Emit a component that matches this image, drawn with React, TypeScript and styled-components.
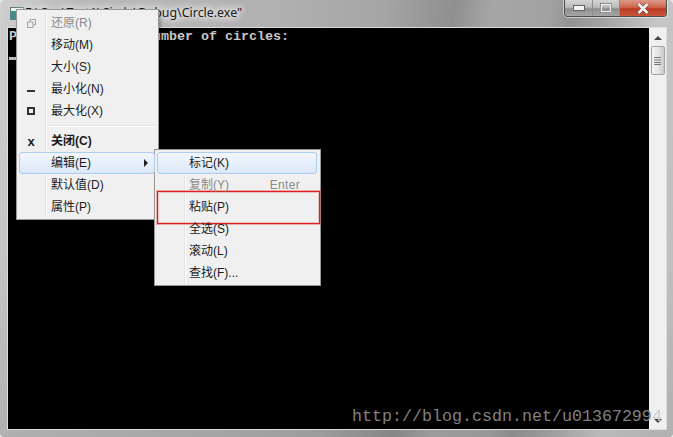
import React from "react";
import styled, { createGlobalStyle } from "styled-components";

const Global = createGlobalStyle`
  html, body { margin: 0; padding: 0; background: #e8e8e8; overflow: hidden; }
  #root { width: 673px; height: 437px; }
`;
const UI = `"Liberation Sans", "Noto Sans CJK SC", sans-serif`;

const Win = styled.div`
  position: relative; width: 673px; height: 437px; display: flex; flex-direction: column; overflow: hidden;
  border-radius: 5px 5px 4px 4px;
  background: linear-gradient(#00000000 60%, #00000010), linear-gradient(98deg, #cfcfcf 0%, #bababa 10%, #b0b0b0 38%, #a6a6a6 52%, #8f8f8f 62%, #a6a6a6 67%, #a2a2a2 75%, #939393 78%, #aaaaaa 84%, #c6c6c6 90%, #bcbcbc 100%);
`;
const TitleBar = styled.div`
  height: 27px; flex: none; display: flex; align-items: flex-start; padding-left: 10px; box-sizing: border-box;
`;
const AppIcon = styled.div`
  width: 14px; height: 13px; margin-top: 7px; flex: none; box-sizing: border-box;
  border: 1px solid #5f7f80; background: linear-gradient(#eef4f4 0 3px, #3f8f86 3px);
`;
const TitleText = styled.div`
  margin: 5px 0 0 1px; width: 212px; font: 12.4px/15px "Noto Sans", sans-serif; color: #1a1a1a; white-space: nowrap;
  text-shadow: 0 0 6px #f4f4f4, 0 0 6px #f4f4f4, 0 0 10px #e8e8e8, 0 0 14px #e8e8e8;
`;
const Caption = styled.div`
  margin-left: auto; margin-right: 6px; width: 103px; height: 17px; display: flex; box-sizing: border-box;
  border: 1px solid #4e4e4e; border-top: none; border-radius: 0 0 4px 4px; overflow: hidden;
  box-shadow: 0 0 0 1px rgba(255,255,255,.5);
`;
const CapBtn = styled.div<{ $w: number; $red?: boolean }>`
  width: ${p => p.$w}px; flex: none; display: flex; align-items: center; justify-content: center; box-sizing: border-box;
  border-right: ${p => (p.$red ? "none" : "1px solid #8e8e8e")};
  background: ${p => p.$red
    ? "linear-gradient(#dc9a88 0%, #d0664c 45%, #bb3a22 55%, #c8583c 100%)"
    : "linear-gradient(#d4d4d4 0%, #bcbcbc 45%, #8f8f8f 55%, #a6a6a6 100%)"};
`;
const Client = styled.div`
  flex: 1; display: flex; margin: 0 6px 7px 7px; border: 1px solid #dcdcdc;
`;
const Console = styled.div`
  flex: 1; background: #000; color: #c8c8c8; font: bold 13.33px/16px "Liberation Mono", monospace; padding: 1px 0 0 1px; white-space: pre;
`;
const Cursor = styled.div`
  width: 8px; height: 3px; background: #b8b8b8; margin-top: 12px;
`;
const Scrollbar = styled.div`
  width: 17px; flex: none; display: flex; flex-direction: column; align-items: center; background: #f0f0f0; box-sizing: border-box; padding-top: 8px;
`;
const Thumb = styled.div`
  width: 14px; height: 29px; margin-top: 6px; box-sizing: border-box; border: 1px solid #a4a4a4; border-radius: 2px;
  background: linear-gradient(90deg, #f4f4f4, #e4e4e4 55%, #c8c8c8); display: flex; align-items: center; justify-content: center;
`;
const ScrollGap = styled.div` flex: 1; `;
const Arrow = styled.div<{ $down?: boolean }>`
  width: 0; height: 0; border-left: 4px solid transparent; border-right: 4px solid transparent;
  ${p => (p.$down ? "border-top: 4px solid #444; margin-bottom: 6px;" : "border-bottom: 4px solid #444;")}
`;
const Watermark = styled.div`
  position: absolute; left: 352px; top: 407px; font: 16.67px/20px "Liberation Mono", monospace; color: #808080; white-space: nowrap;
`;
const Faint = styled.span` color: #cfcfcf; `;
const Menu = styled.div<{ $x: number; $y: number; $w: number; $gutter: number }>`
  position: absolute; left: ${p => p.$x}px; top: ${p => p.$y}px; width: ${p => p.$w}px; box-sizing: border-box; padding: 2px 2px 1px;
  background: #f0f0f0; border: 1px solid #979797; box-shadow: 2px 2px 3px rgba(0,0,0,.25);
  font: 12px/22px ${UI}; color: #1c1c1c;
  &::before { content: ""; position: absolute; top: 2px; bottom: 2px; left: ${p => p.$gutter}px; width: 2px; background: linear-gradient(90deg, #e2e3e3 50%, #fff 50%); }
`;
const Item = styled.div<{ $on?: boolean; $off?: boolean; $bold?: boolean; $pad: number }>`
  position: relative; z-index: 1; height: 22px; display: flex; align-items: center; box-sizing: border-box; padding: 0 0 1px ${p => p.$pad}px;
  margin-right: 1px; border-radius: 3px; border: 1px solid ${p => (p.$on ? "#aeccee" : "transparent")};
  background: ${p => (p.$on ? "linear-gradient(#f2f6fc, #dce8f8)" : "transparent")};
  color: ${p => (p.$off ? "#8a8a8a" : "#1c1c1c")}; font-weight: ${p => (p.$bold ? 700 : 400)};
`;
const ItemIcon = styled.div`
  position: absolute; left: 4px; top: 3px; width: 14px; height: 14px; display: flex; align-items: center; justify-content: center; font: bold 13px/13px "Liberation Sans", sans-serif;
`;
const Sep = styled.div`
  height: 8px; margin-left: 30px; position: relative; z-index: 1;
  &::after { content: ""; display: block; position: relative; top: 3px; height: 2px; background: linear-gradient(#e2e3e3 50%, #fff 50%); }
`;
const Chevron = styled.div`
  position: absolute; right: 6px; top: 6px; width: 0; height: 0; border-top: 4px solid transparent; border-bottom: 4px solid transparent; border-left: 4px solid #222;
`;
const Shortcut = styled.span`
  position: absolute; right: 16px; letter-spacing: .3px;
`;
const RedBox = styled.div`
  position: absolute; left: 157px; top: 191px; width: 163px; height: 33px; box-sizing: border-box; border: 1px solid #e02020;
  box-shadow: 0 0 0 1px rgba(224, 60, 60, .4), inset 0 0 0 1px rgba(224, 60, 60, .25);
`;
const Px = styled.svg` display: block; `;

const P = 31;
const S = 31;

export default function App() {
  return (
    <Win>
      <Global />
      <TitleBar>
        <AppIcon />
        <TitleText>E:\C++\Test1\Circle\Debug\Circle.exe"</TitleText>
        <Caption>
          <CapBtn $w={28}>
            <Px width="12" height="6" viewBox="0 0 12 6"><rect x=".5" y=".5" width="11" height="5" fill="#f4f4f4" stroke="#666" /></Px>
          </CapBtn>
          <CapBtn $w={27}>
            <Px width="12" height="10" viewBox="0 0 12 10"><rect x="1" y="1" width="10" height="8" fill="none" stroke="#f0f0f0" strokeWidth="2" /><rect x=".5" y=".5" width="11" height="9" fill="none" stroke="#555" strokeWidth=".6" /></Px>
          </CapBtn>
          <CapBtn $w={46} $red>
            <Px width="12" height="11" viewBox="0 0 12 11"><path d="M1.5 1 10.5 10M10.5 1 1.5 10" stroke="#5a3028" strokeWidth="3.6" /><path d="M1.5 1 10.5 10M10.5 1 1.5 10" stroke="#f4f4f4" strokeWidth="2.6" /></Px>
          </CapBtn>
        </Caption>
      </TitleBar>
      <Client>
        <Console>
          {"Please input the number of circles:"}
          <Cursor />
        </Console>
        <Scrollbar>
          <Arrow />
          <Thumb>
            <Px width="7" height="8" viewBox="0 0 7 8"><path d="M0 .5H7M0 3H7M0 5.500H7M0 7.500H7" stroke="#777" strokeWidth="1" /></Px>
          </Thumb>
          <ScrollGap />
          <Arrow $down />
        </Scrollbar>
      </Client>
      <Watermark>http://blog.csdn.net/u01367299<Faint>4</Faint></Watermark>

      <Menu $x={16} $y={9} $w={143} $gutter={28}>
        <Item $pad={P} $off>
          <ItemIcon>
            <Px width="9" height="9" viewBox="0 0 9 9"><path d="M3 2.500V.5H8.500V6H6.500M.5 3H6V8.500H.5Z" fill="none" stroke="#a0a0a0" /></Px>
          </ItemIcon>
          还原(R)
        </Item>
        <Item $pad={P}>移动(M)</Item>
        <Item $pad={P}>大小(S)</Item>
        <Item $pad={P}>
          <ItemIcon>
            <Px width="8" height="8" viewBox="0 0 8 8"><rect y="5" width="8" height="2" fill="#333" /></Px>
          </ItemIcon>
          最小化(N)
        </Item>
        <Item $pad={P}>
          <ItemIcon>
            <Px width="8" height="8" viewBox="0 0 8 8"><rect x="1" y="1" width="6" height="6" fill="none" stroke="#333" strokeWidth="2" /></Px>
          </ItemIcon>
          最大化(X)
        </Item>
        <Sep />
        <Item $pad={P} $bold>
          <ItemIcon>x</ItemIcon>
          关闭(C)
        </Item>
        <Item $pad={P} $on>编辑(E)<Chevron /></Item>
        <Item $pad={P}>默认值(D)</Item>
        <Item $pad={P}>属性(P)</Item>
      </Menu>

      <Menu $x={154} $y={149} $w={167} $gutter={29}>
        <Item $pad={S} $on>标记(K)</Item>
        <Item $pad={S} $off>复制(Y)<Shortcut>Enter</Shortcut></Item>
        <Item $pad={S}>粘贴(P)</Item>
        <Item $pad={S}>全选(S)</Item>
        <Item $pad={S}>滚动(L)</Item>
        <Item $pad={S}>查找(F)...</Item>
      </Menu>
      <RedBox />
    </Win>
  );
}
